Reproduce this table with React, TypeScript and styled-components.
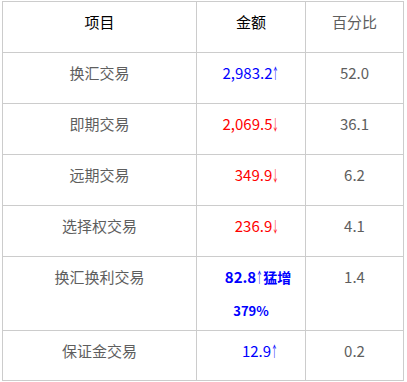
import React from "react";
import styled, { createGlobalStyle } from "styled-components";

const GlobalStyle = createGlobalStyle`
    body {
        margin: 0;
        background: #ffffff;
        font-family: "Noto Sans CJK SC", "Noto Sans", sans-serif;
    }
`;

const Table = styled.table`
    margin: 1px 0 0 2px;
    width: 402px;
    table-layout: fixed;
    border-collapse: collapse;
    border: 1px solid #cccccc;
    font-size: 15px;
    line-height: 22px;
`;

const Row = styled.tr<{ $h: number }>`
    height: ${(p) => p.$h}px;
`;

const Cell = styled.td<{ $shift?: number }>`
    border: 1px solid #cccccc;
    padding: 9px 0 0 ${(p) => p.$shift ?? 0}px;
    vertical-align: top;
    text-align: center;
    color: #5e5e5e;
    white-space: nowrap;
`;

const HeadCell = styled(Cell)<{ $dark?: boolean }>`
    color: ${(p) => (p.$dark ? "#000000" : "#5e5e5e")};
`;

const Amount = styled.span<{ $up: boolean }>`
    color: ${(p) => (p.$up ? "#0000ff" : "#ff0000")};
`;

// full-width arrow squeezed to the narrow look of the reference
const Arrow = styled.span`
    display: inline-block;
    width: 7px;
    font-weight: 400;
    transform: scaleX(0.45);
    transform-origin: left center;
`;

const Surge = styled.span`
    color: #0000ff;
    font-weight: 700;
`;

const SurgeNote = styled.span`
    font-size: 14px;
`;

const SurgeLine = styled.div`
    margin-top: 12px;
    font-size: 13px;
    color: #0000ff;
    font-weight: 700;
    padding-right: 14px;
`;

type Item = { name: string; amount: string; up: boolean; pct: string; shift?: number };

const items: Item[] = [
    { name: "换汇交易", amount: "2,983.2", up: true, pct: "52.0" },
    { name: "即期交易", amount: "2,069.5", up: false, pct: "36.1" },
    { name: "远期交易", amount: "349.9", up: false, pct: "6.2", shift: 12 },
    { name: "选择权交易", amount: "236.9", up: false, pct: "4.1", shift: 12 },
];

export default function App() {
    return (
        <>
            <GlobalStyle />
            <Table>
                <colgroup>
                    <col style={{ width: 194 }} />
                    <col style={{ width: 109 }} />
                    <col style={{ width: 98 }} />
                </colgroup>
                <tbody>
                    <Row $h={51}>
                        <HeadCell $dark>项目</HeadCell>
                        <HeadCell $dark>金额</HeadCell>
                        <HeadCell>百分比</HeadCell>
                    </Row>
                    {items.map((it) => (
                        <Row $h={51} key={it.name}>
                            <Cell>{it.name}</Cell>
                            <Cell $shift={it.shift}>
                                <Amount $up={it.up}>
                                    {it.amount}
                                    <Arrow>{it.up ? "↑" : "↓"}</Arrow>
                                </Amount>
                            </Cell>
                            <Cell>{it.pct}</Cell>
                        </Row>
                    ))}
                    <Row $h={74}>
                        <Cell>换汇换利交易</Cell>
                        <Cell $shift={14}>
                            <Surge>
                                82.8<Arrow>↑</Arrow>
                                <SurgeNote>猛增</SurgeNote>
                            </Surge>
                            <SurgeLine>379%</SurgeLine>
                        </Cell>
                        <Cell>1.4</Cell>
                    </Row>
                    <Row $h={50}>
                        <Cell>保证金交易</Cell>
                        <Cell $shift={18}>
                            <Amount $up>
                                12.9<Arrow>↑</Arrow>
                            </Amount>
                        </Cell>
                        <Cell>0.2</Cell>
                    </Row>
                </tbody>
            </Table>
        </>
    );
}
